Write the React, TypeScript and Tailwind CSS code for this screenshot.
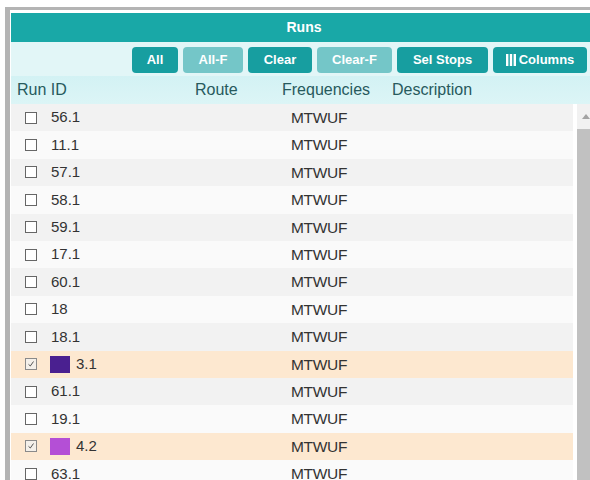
import React from "react";

type Run = { id: string; freq: string; checked?: boolean; color?: string };

const runs: Run[] = [
  { id: "56.1", freq: "MTWUF" },
  { id: "11.1", freq: "MTWUF" },
  { id: "57.1", freq: "MTWUF" },
  { id: "58.1", freq: "MTWUF" },
  { id: "59.1", freq: "MTWUF" },
  { id: "17.1", freq: "MTWUF" },
  { id: "60.1", freq: "MTWUF" },
  { id: "18", freq: "MTWUF" },
  { id: "18.1", freq: "MTWUF" },
  { id: "3.1", freq: "MTWUF", checked: true, color: "#4a2090" },
  { id: "61.1", freq: "MTWUF" },
  { id: "19.1", freq: "MTWUF" },
  { id: "4.2", freq: "MTWUF", checked: true, color: "#b44fd6" },
  { id: "63.1", freq: "MTWUF" },
];

function Btn({ label, w, faded, icon }: { label: string; w: string; faded?: boolean; icon?: boolean }) {
  return (
    <button
      className={`${w} h-[26px] rounded-[4px] text-white font-bold text-[13px] flex items-center justify-center gap-[3px] ${
        faded ? "bg-[#74c6c8]" : "bg-[#179ea0]"
      }`}
    >
      {icon && (
        <svg width="10" height="12" viewBox="0 0 10 12">
          <rect x="0" y="0" width="2.4" height="12" fill="white" />
          <rect x="3.8" y="0" width="2.4" height="12" fill="white" />
          <rect x="7.6" y="0" width="2.4" height="12" fill="white" />
        </svg>
      )}
      {label}
    </button>
  );
}

function Check({ checked }: { checked?: boolean }) {
  if (checked) {
    return (
      <span className="w-[12px] h-[12px] border border-[#8a8a8a] bg-[#f4f0ea] flex items-center justify-center">
        <svg width="8" height="8" viewBox="0 0 8 8">
          <path d="M1.5 4.3 L3.3 6 L6.5 1.5" stroke="#555" strokeWidth="1" fill="none" />
        </svg>
      </span>
    );
  }
  return <span className="w-[12px] h-[12px] border border-[#666] bg-white" />;
}

export default function App() {
  return (
    <div
      className="w-[590px] h-[480px] overflow-hidden bg-white pt-[7px] pl-[5px]"
      style={{ fontFamily: '"Liberation Sans", Arial, sans-serif' }}
    >
      <div className="w-[600px] h-[480px] border-l-[5px] border-t-[3px] border-[#b4b4b4] pt-[3px] pl-[1px]">
        <div className="w-[586px]">
          {/* title bar */}
          <div className="h-[29px] bg-[#19a8a7] flex items-center justify-center text-white font-bold text-[14px]">
            Runs
          </div>
          {/* toolbar */}
          <div className="h-[34px] bg-[#e2f6f7] flex items-center justify-end gap-[5px] pr-[10px] pt-[1px]">
            <Btn label="All" w="w-[46px]" />
            <Btn label="All-F" w="w-[60px]" faded />
            <Btn label="Clear" w="w-[64px]" />
            <Btn label="Clear-F" w="w-[75px]" faded />
            <Btn label="Sel Stops" w="w-[91px]" />
            <Btn label="Columns" w="w-[94px]" icon />
          </div>
          {/* column headings */}
          <div className="h-[28px] bg-gradient-to-b from-[#d3f2f4] to-[#dcf5f6] flex items-center text-[16px] text-[#275a5d]">
            <span className="w-[184px] pl-[6px]">Run ID</span>
            <span className="w-[87px]">Route</span>
            <span className="w-[110px]">Frequencies</span>
            <span>Description</span>
          </div>
          {/* body */}
          <div className="flex">
            <div className="w-[562px]">
              {runs.map((r, i) => (
                <div
                  key={r.id}
                  className={`h-[27.4px] flex items-center text-[15px] text-[#333] ${
                    r.checked ? "bg-[#fde8d0]" : i % 2 === 0 ? "bg-[#f2f2f2]" : "bg-[#fafafa]"
                  }`}
                >
                  <div className="w-[280px] flex items-center pl-[14px]">
                    <Check checked={r.checked} />
                    {r.color ? (
                      <span className="flex items-center ml-[13px]">
                        <span className="w-[20px] h-[17px]" style={{ backgroundColor: r.color }} />
                        <span className="ml-[6px]">{r.id}</span>
                      </span>
                    ) : (
                      <span className="ml-[14px]">{r.id}</span>
                    )}
                  </div>
                  <span className="text-[15.5px] tracking-[-0.3px]">{r.freq}</span>
                </div>
              ))}
            </div>
            {/* scrollbar */}
            <div className="ml-[4px] w-[17px] bg-[#f1f1f1] flex flex-col">
              <div className="h-[25px] flex items-center justify-center">
                <svg width="8" height="5" viewBox="0 0 8 5">
                  <path d="M0 5 L4 0 L8 5 Z" fill="#a3a3a3" />
                </svg>
              </div>
              <div className="flex-1 bg-[#c1c1c1]" />
            </div>
          </div>
        </div>
      </div>
    </div>
  );
}
